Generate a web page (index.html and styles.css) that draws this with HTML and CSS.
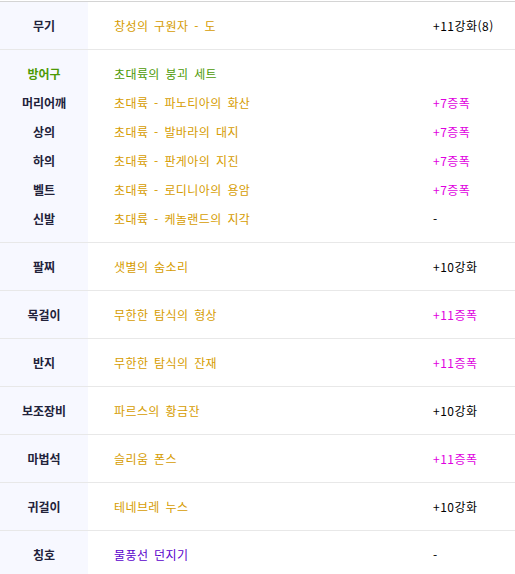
FILE: index.html
```html
<!DOCTYPE html>
<html lang="ko">
<head>
<meta charset="utf-8">
<link rel="stylesheet" href="styles.css">
</head>
<body>
<div class="eq">
  <div class="row">
    <div class="lab">무기</div>
    <div class="name orange">창성의 구원자 - 도</div>
    <div class="opt">+11강화(8)</div>
  </div>
  <div class="row group">
    <div class="lab">
      <div class="ln green">방어구</div>
      <div class="ln">머리어깨</div>
      <div class="ln">상의</div>
      <div class="ln">하의</div>
      <div class="ln">벨트</div>
      <div class="ln">신발</div>
    </div>
    <div class="name">
      <div class="ln green">초대륙의 붕괴 세트</div>
      <div class="ln orange">초대륙 - 파노티아의 화산</div>
      <div class="ln orange">초대륙 - 발바라의 대지</div>
      <div class="ln orange">초대륙 - 판게아의 지진</div>
      <div class="ln orange">초대륙 - 로디니아의 용암</div>
      <div class="ln orange">초대륙 - 케놀랜드의 지각</div>
    </div>
    <div class="opt">
      <div class="ln">&nbsp;</div>
      <div class="ln pink">+7증폭</div>
      <div class="ln pink">+7증폭</div>
      <div class="ln pink">+7증폭</div>
      <div class="ln pink">+7증폭</div>
      <div class="ln">-</div>
    </div>
  </div>
  <div class="row">
    <div class="lab">팔찌</div>
    <div class="name orange">샛별의 숨소리</div>
    <div class="opt">+10강화</div>
  </div>
  <div class="row">
    <div class="lab">목걸이</div>
    <div class="name orange">무한한 탐식의 형상</div>
    <div class="opt pink">+11증폭</div>
  </div>
  <div class="row">
    <div class="lab">반지</div>
    <div class="name orange">무한한 탐식의 잔재</div>
    <div class="opt pink">+11증폭</div>
  </div>
  <div class="row">
    <div class="lab">보조장비</div>
    <div class="name orange">파르스의 황금잔</div>
    <div class="opt">+10강화</div>
  </div>
  <div class="row">
    <div class="lab">마법석</div>
    <div class="name orange">슬리움 폰스</div>
    <div class="opt pink">+11증폭</div>
  </div>
  <div class="row">
    <div class="lab">귀걸이</div>
    <div class="name orange">테네브레 누스</div>
    <div class="opt">+10강화</div>
  </div>
  <div class="row last">
    <div class="lab">칭호</div>
    <div class="name purple">물풍선 던지기</div>
    <div class="opt">-</div>
  </div>
</div>
</body>
</html>
```

FILE: styles.css
```css
html, body {
  margin: 0;
  padding: 0;
  background: #fff;
}
body {
  font-family: "Noto Sans CJK KR", "Noto Sans", sans-serif;
  font-size: 12px;
  color: #000;
  padding-top: 1px;
}
.eq {
  width: 515px;
  border-top: 1px solid #d4d4d4;
}
.row {
  display: grid;
  grid-template-columns: 88px 345px 82px;
  height: 47px;
  align-items: stretch;
  border-bottom: 1px solid #e8e8e8;
}
.row.last {
  border-bottom: none;
}
.row.group {
  height: 192px;
}
.lab {
  background: #f7f8ff;
  font-weight: bold;
  color: #22223a;
  display: flex;
  flex-direction: column;
  align-items: center;
  justify-content: center;
}
.name {
  padding-left: 26px;
  display: flex;
  flex-direction: column;
  justify-content: center;
  letter-spacing: 0.4px;
  word-spacing: 2px;
}
.opt {
  display: flex;
  flex-direction: column;
  justify-content: center;
  letter-spacing: 0.5px;
}
.ln {
  height: 29px;
  line-height: 29px;
}
.orange { color: #d69c00; }
.green { color: #4d9a05; }
.pink { color: #e000e0; }
.purple { color: #5a00cc; }
```
